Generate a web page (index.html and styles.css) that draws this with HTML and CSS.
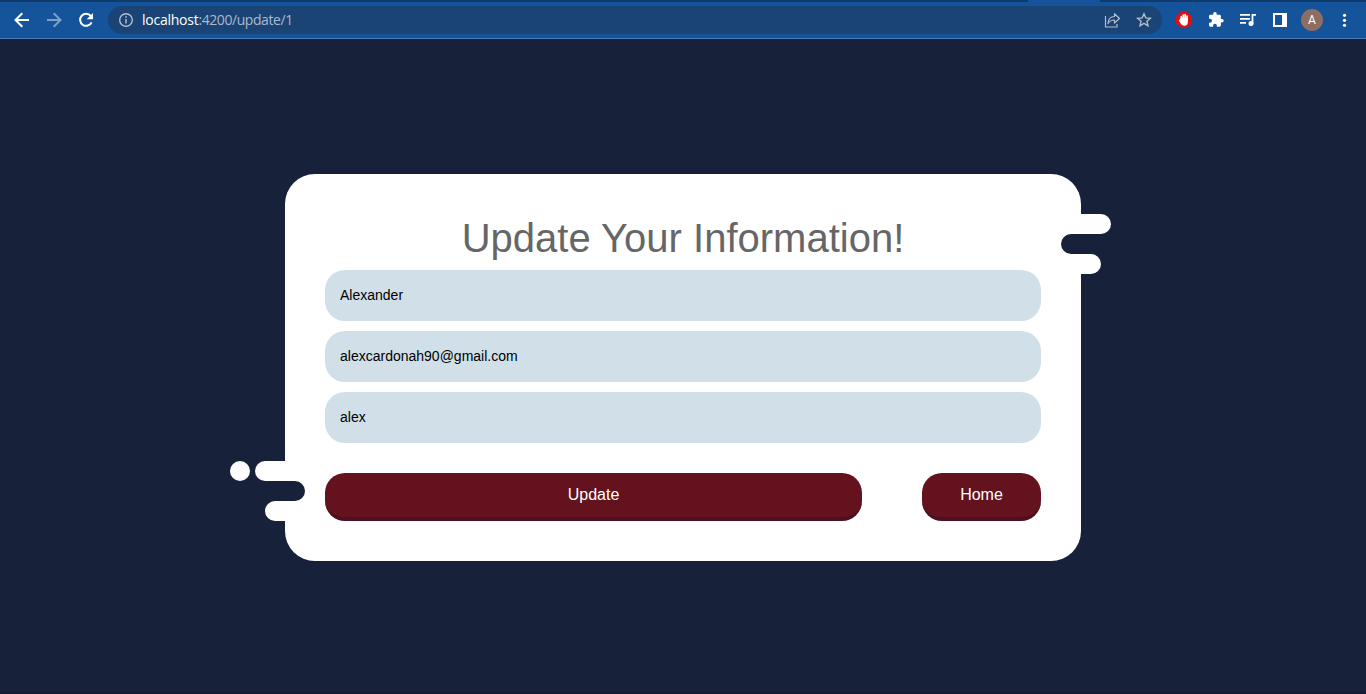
FILE: index.html
```html
<!DOCTYPE html>
<html lang="en">
<head>
<meta charset="utf-8">
<title>Update</title>
<link rel="stylesheet" href="styles.css">
</head>
<body>
<header class="browser">
  <div class="tabstrip"><div class="active-tab"></div></div>
  <div class="toolbar">
    <svg class="icon" viewBox="0 0 32 32"><path d="M23 16H10M16.300 9.200L9.500 16l6.800 6.800" fill="none" stroke="#fff" stroke-width="2"/></svg>
    <svg class="icon dim" viewBox="0 0 32 32"><path d="M9 16H22M15.700 9.200L22.500 16l-6.800 6.800" fill="none" stroke="#fff" stroke-width="2"/></svg>
    <svg class="icon" viewBox="0 0 32 32"><path d="M20.800 12A6 6 0 1 0 21.600 18.300" fill="none" stroke="#fff" stroke-width="2"/><path d="M23 9v6.300h-6.300z" fill="#fff"/></svg>
    <div class="address">
      <svg class="info" viewBox="0 0 16 16"><circle cx="8" cy="8" r="6.300" fill="none" stroke="#b3bdc9" stroke-width="1.400"/><path d="M8 7v4.500M8 4.300v1.500" stroke="#b3bdc9" stroke-width="1.500"/></svg>
      <div class="url"><span class="host">localhost</span><span class="path">:4200/update/1</span></div>
      <svg class="icon" viewBox="0 0 32 32"><path d="M9.500 12v11h11.500v-3M12 19.500c.3-5 3-7 6.500-7V9.700l5 4.800-5 4.500v-3c-3 0-5 1-6.500 3.500z" fill="none" stroke="#b3bdc9" stroke-width="1.200" stroke-linejoin="round"/></svg>
      <svg class="icon" viewBox="0 0 32 32"><path d="M16 9.700l1.800 4.200 4.600.4-3.500 3 1.100 4.500-4-2.400-4 2.400 1.100-4.500-3.500-3 4.600-.4z" fill="none" stroke="#b3bdc9" stroke-width="1.400"/></svg>
    </div>
    <svg class="icon" viewBox="0 0 32 32"><path d="M12.700 8h6.600l4.700 4.700v6.600L19.300 24h-6.600L8 19.300v-6.600z" fill="#e40d12"/><path d="M13.300 15v-2.500M15.200 15v-4M17.100 15v-4.300M19 15v-3" stroke="#fff" stroke-width="1.700" stroke-linecap="round"/><path d="M12.400 14h7.500v4q0 3.700-3.500 3.700-2.300 0-3.400-1.700l-2.300-3.500 1-.7z" fill="#fff"/></svg>
    <svg class="icon" viewBox="0 0 32 32"><path transform="translate(7.600 7.300) scale(.7)" d="M20.500 11H19V7c0-1.100-.9-2-2-2h-4V3.500a2.500 2.500 0 0 0-5 0V5H4c-1.100 0-2 .9-2 2v3.800h1.500a2.700 2.700 0 0 1 0 5.400H2V20c0 1.100.9 2 2 2h3.800v-1.500a2.700 2.700 0 0 1 5.400 0V22H17c1.100 0 2-.9 2-2v-4h1.500a2.500 2.500 0 0 0 0-5z" fill="#fff"/></svg>
    <svg class="icon" viewBox="0 0 32 32"><path d="M8 10.800h10M8 14.800h10M8 18.800h6M20.500 19.500V10.800h3.500" fill="none" stroke="#fff" stroke-width="1.800"/><circle cx="19" cy="19.500" r="2.500" fill="#fff"/></svg>
    <svg class="icon" viewBox="0 0 32 32"><path d="M9 9h14v14H9zM11 11v10h7V11z" fill="#fff" fill-rule="evenodd"/></svg>
    <div class="slot"><div class="avatar">A</div></div>
    <svg class="icon" viewBox="0 0 32 32"><g fill="#fff"><circle cx="16.500" cy="11.300" r="1.600"/><circle cx="16.500" cy="16.300" r="1.600"/><circle cx="16.500" cy="21.300" r="1.600"/></g></svg>
  </div>
</header>
<main class="page">
  <form class="card">
    <div class="deco deco-right"><i class="bar long"></i><i class="bar notch"></i><i class="bar short"></i></div>
    <div class="deco deco-left"><i class="dot"></i><i class="bar long"></i><i class="bar notch"></i><i class="bar short"></i></div>
    <h1 class="title">Update Your Information!</h1>
    <input class="field" type="text" value="Alexander">
    <input class="field" type="text" value="alexcardonah90@gmail.com">
    <input class="field" type="text" value="alex">
    <div class="actions">
      <button class="btn btn-update" type="button">Update</button>
      <button class="btn btn-home" type="button">Home</button>
    </div>
  </form>
</main>
</body>
</html>
```

FILE: styles.css
```css
* { box-sizing: border-box; }
body {
  margin: 0;
  height: 694px;
  display: flex;
  flex-direction: column;
  overflow: hidden;
  background: #18213a;
  font-family: "Liberation Sans", Arial, sans-serif;
}
.browser {
  height: 39px;
  background: #15539b;
  border-bottom: 1px solid #4a7cb5;
}
.tabstrip {
  height: 2px;
  background: #0f3b6c;
  padding-left: 1028px;
}
.active-tab { width: 72px; height: 2px; background: #15539b; }
.toolbar {
  height: 36px;
  display: flex;
  align-items: center;
  padding-left: 6px;
}
.icon, .slot { width: 32px; height: 32px; flex: none; }
.dim { opacity: .45; }
.address {
  width: 1054px;
  height: 28px;
  margin: 0 6px;
  padding: 0 2px 0 10px;
  display: flex;
  align-items: center;
  border-radius: 14px;
  background: #194475;
}
.info { width: 16px; height: 16px; flex: none; }
.url {
  flex: 1;
  margin-left: 8px;
  color: #a9bacd;
  font: 14px/20px "Open Sans", sans-serif;
}
.host { color: #fff; letter-spacing: -.25px; }
.path { letter-spacing: -.43px; }
.slot { display: flex; align-items: center; justify-content: center; }
.avatar {
  width: 22px;
  height: 22px;
  border-radius: 50%;
  background: #8d6e63;
  color: #fff;
  font: 12px/22px Roboto, sans-serif;
  text-align: center;
}
.page {
  flex: 1;
  padding-top: 135px;
  border-bottom: 2px solid #151a30;
}
.card {
  position: relative;
  width: 796px;
  height: 387px;
  margin: 0 auto;
  padding: 40px;
  border-radius: 30px;
  background: #fff;
}
.title {
  margin: 0 0 8px;
  height: 48px;
  color: #666;
  font-size: 40px;
  font-weight: 400;
  line-height: 48px;
  text-align: center;
}
.field {
  display: block;
  width: 100%;
  height: 51px;
  margin: 0 0 10px;
  padding: 0 15px 2px;
  border: 0;
  border-radius: 20px;
  background: #d0dfe8;
  color: #000;
  font: 14px "Liberation Sans", Arial, sans-serif;
}
.actions { display: flex; justify-content: space-between; margin-top: 30px; }
.btn {
  height: 48px;
  padding: 0;
  border: 0;
  border-bottom: 4px solid #4b1120;
  border-radius: 20px;
  background: #64121d;
  color: #fff;
  font: 16px "Liberation Sans", Arial, sans-serif;
}
.btn-update { width: 537px; }
.btn-home { width: 119px; }
.deco { position: absolute; display: flex; flex-direction: column; }
.deco-right { left: 776px; top: 40px; }
.deco-left { right: 776px; top: 287px; align-items: flex-end; }
.bar { height: 20px; background: #fff; }
.deco-right .bar { border-radius: 0 10px 10px 0; }
.deco-left .bar { border-radius: 10px 0 0 10px; }
.deco .long { width: 50px; }
.deco .short { width: 40px; }
.deco .notch { width: 20px; background: #18213a; }
.deco-right .notch { border-radius: 10px 0 0 10px; }
.deco-left .notch { border-radius: 0 10px 10px 0; }
.dot {
  position: absolute;
  right: 55px;
  top: 0;
  width: 20px;
  height: 20px;
  border-radius: 50%;
  background: #fff;
}
```
